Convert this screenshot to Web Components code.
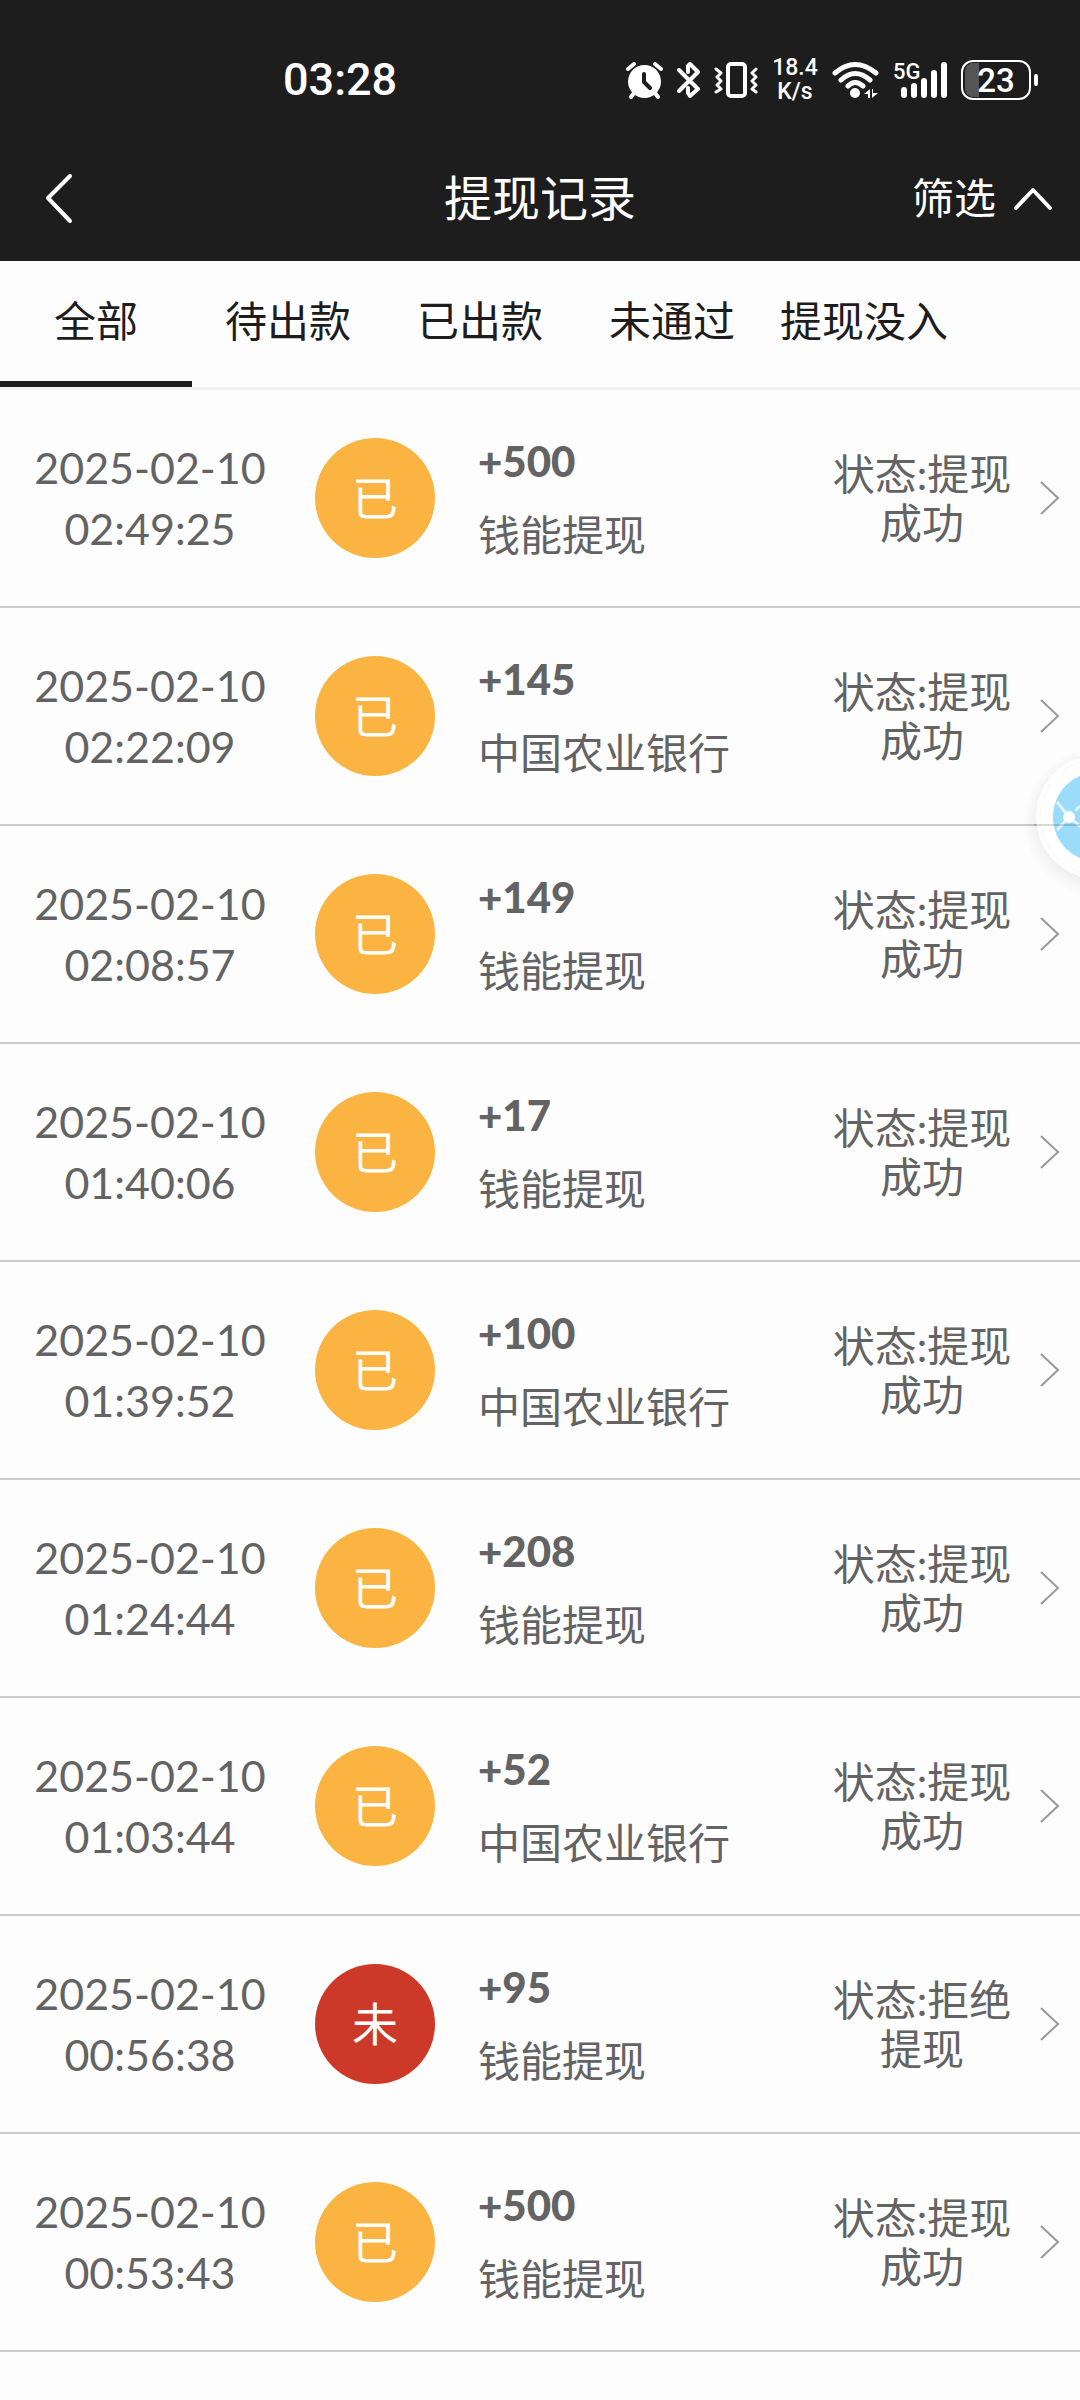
<!DOCTYPE html>
<html lang="zh-CN">
<head>
<meta charset="utf-8">
<meta name="viewport" content="width=device-width, initial-scale=1">
<title>提现记录</title>
<style>
  html, body { margin: 0; }
  body {
    position: relative;
    min-height: 100vh;
    overflow-x: hidden;
    background: #fdfdfd;
    color: #636363;
    font-family: Lato, "Noto Sans CJK SC", sans-serif;
    font-size: 42px;
  }
</style>
</head>
<body>
<status-bar time="03:28"></status-bar>
<nav-bar>提现记录<span slot="action">筛选</span></nav-bar>
<tab-strip></tab-strip>
<main><record-list></record-list></main>
<floating-ball></floating-ball>

<template id="status-bar">
  <style>
    :host {
      display: flex; justify-content: space-between; align-items: center;
      padding: 56px 41px 31px 283px;
      background: #1d1d1d; color: #fff;
      font-family: Roboto, sans-serif;
    }
    time { font-size: 45px; line-height: 48px; font-weight: 500; }
    .icons { display: flex; align-items: center; gap: 14px; }
    svg { display: block; height: 48px; fill: none; stroke: #fff; stroke-linecap: round; stroke-linejoin: round; }
    svg text { fill: #fff; stroke: none; }
    .speed { display: flex; flex-direction: column; width: 46px; text-align: center; font-size: 23px; line-height: 24px; font-weight: 500; }
  </style>
  <time></time>
  <div class="icons">
    <svg width="37" viewBox="0 0 37 48">
      <circle cx="18.500" cy="25.500" r="16.500" fill="#fff" stroke="none"/>
      <path d="M2 13 8 8M35 13 29 8" stroke-width="4"/>
      <path d="M8 37 5 41M29 37 32 41" stroke-width="4"/>
      <path d="M18 18V26L24 32" stroke="#1d1d1d" stroke-width="4"/>
    </svg>
    <svg width="23" viewBox="0 0 23 48" stroke-width="4">
      <path d="M2 14 21 33 13 40 11 37 11 32M2 35 21 16 13 8 11 10V16"/>
    </svg>
    <svg width="44" viewBox="0 0 44 48">
      <rect x="14" y="8" width="17" height="32" rx="3" stroke-width="4"/>
      <path d="M2 13 7 17 3 21 7 25 3 29 7 33 2 36M42 13 38 17 42 21 38 25 42 29 38 33 42 36" stroke-width="3"/>
    </svg>
    <div class="speed"><span>18.4</span><span>K/s</span></div>
    <svg width="47" viewBox="0 0 47 48">
      <path d="M3 17Q23 0 44 17M9 24Q23 11 38 24M16 30Q23 23 31 30" stroke-width="5"/>
      <circle cx="23" cy="37" r="5" fill="#fff" stroke="none"/>
      <path d="M32 38 38 33V42H36V38ZM40 33H41V37H46L40 42Z" fill="#fff" stroke="none"/>
    </svg>
    <svg width="54" viewBox="0 0 54 48">
      <text x="0" y="23" font-size="22" font-weight="500">5G</text>
      <path d="M11 34V39M21 30V39M31 25V39M41 17V39M51 9V39" stroke-width="6"/>
    </svg>
    <svg width="78" viewBox="0 0 78 48">
      <path d="M18 7V41H13Q4 41 4 32V16Q4 7 13 7Z" fill="#555" stroke="none"/>
      <rect x="1" y="5" width="68" height="38" rx="11" stroke-width="2"/>
      <path d="M75 20V28" stroke-width="4"/>
      <text x="35" y="36" font-size="33" font-weight="500" text-anchor="middle">23</text>
    </svg>
  </div>
</template>

<template id="nav-bar">
  <style>
    :host {
      display: grid; grid-template-columns: 1fr auto 1fr; align-items: center;
      height: 126px; background: #1d1d1d; color: #fff;
    }
    button { all: unset; box-sizing: border-box; display: flex; align-items: center; cursor: pointer; font-size: 42px; line-height: 60px; }
    .back { justify-self: start; padding: 0 44px; }
    .filter { justify-self: end; gap: 16px; padding-right: 26px; }
    h1 { margin: 0; font-size: 48px; line-height: 60px; font-weight: 400; }
    svg { display: block; fill: none; stroke: #fff; stroke-width: 4; stroke-linecap: round; stroke-linejoin: round; }
  </style>
  <button class="back" type="button" aria-label="返回">
    <svg width="30" height="52" viewBox="0 0 30 52"><path d="M26 4 4 26 26 49"/></svg>
  </button>
  <h1><slot></slot></h1>
  <button class="filter" type="button">
    <slot name="action"></slot>
    <svg width="42" height="26" viewBox="0 0 42 26"><path d="M4 23 21 5 38 23"/></svg>
  </button>
</template>

<template id="tab-strip">
  <style>
    :host { display: block; border-bottom: 3px solid #f2f2f2; color: #1d1d1d; }
    nav { display: flex; overflow: hidden; }
    button {
      all: unset; box-sizing: border-box; flex: 0 0 192px; height: 126px;
      border-bottom: 6px solid transparent;
      text-align: center; white-space: nowrap; line-height: 118px; cursor: pointer;
    }
    button[aria-selected="true"] { border-bottom-color: #1d1d1d; }
  </style>
  <nav role="tablist"></nav>
</template>

<template id="record-item">
  <style>
    :host { display: block; border-bottom: 2px solid #ccc; }
    a {
      display: grid; grid-template-columns: 300px 120px 1fr 200px 40px; align-items: center;
      height: 216px; padding-right: 18px; color: inherit; text-decoration: none;
    }
    .when { display: flex; flex-direction: column; text-align: center; font-size: 43px; line-height: 61px; }
    .badge {
      display: flex; align-items: center; justify-content: center;
      width: 120px; height: 120px; margin-left: 15px; border-radius: 50%;
      background: #fbb442; color: #fff; font-size: 46px; line-height: 60px;
    }
    :host([rejected]) .badge { background: #cd3928; }
    .info { display: flex; flex-direction: column; gap: 14px; padding-left: 58px; line-height: 60px; }
    .info strong { font-weight: 900; }
    .state { padding-top: 2px; text-align: center; line-height: 49px; }
    svg { display: block; margin-left: 16px; fill: none; stroke: #999; stroke-width: 2; }
  </style>
  <a href="#">
    <time class="when"><span class="date"></span><span class="clock"></span></time>
    <span class="badge"></span>
    <span class="info"><strong></strong><slot></slot></span>
    <span class="state"></span>
    <svg width="22" height="34" viewBox="0 0 22 34"><path d="M3 1 20 17 3 33"/></svg>
  </a>
</template>

<template id="floating-ball">
  <style>
    :host { position: absolute; top: 737px; right: 0; width: 64px; height: 160px; overflow: hidden; }
    button { all: unset; display: block; cursor: pointer; }
    svg { display: block; }
  </style>
  <button type="button" aria-label="悬浮球">
    <svg width="160" height="160" viewBox="0 0 160 160">
      <defs>
        <radialGradient id="halo">
          <stop offset="0.720" stop-color="#000" stop-opacity="0.070"/>
          <stop offset="1" stop-color="#000" stop-opacity="0"/>
        </radialGradient>
      </defs>
      <circle cx="82" cy="85" r="75" fill="url(#halo)"/>
      <circle cx="82" cy="80" r="62" fill="#fff"/>
      <circle cx="82" cy="80" r="58" fill="none" stroke="#f7f7f7"/>
      <circle cx="82" cy="80" r="45" fill="#9adcf9"/>
      <path d="M41 65 53 80 41 93M53 80 66 91" fill="none" stroke="#dff4fd" stroke-width="3"/>
      <path d="M60 74Q61 70 66 69" fill="none" stroke="#dff4fd" stroke-width="3"/>
      <circle cx="53" cy="80" r="6" fill="#fff"/>
      <path d="M18 88H66" stroke="#000" stroke-opacity="0.150" stroke-width="2"/>
    </svg>
  </button>
</template>

<script>
  class TemplateElement extends HTMLElement {
    constructor() {
      super();
      const root = this.attachShadow({ mode: "open" });
      root.append(document.getElementById(this.localName).content.cloneNode(true));
    }
    find(selector) { return this.shadowRoot.querySelector(selector); }
  }

  class StatusBar extends TemplateElement {
    connectedCallback() { this.find("time").textContent = this.getAttribute("time"); }
  }

  class NavBar extends TemplateElement {}

  class TabStrip extends TemplateElement {
    connectedCallback() {
      const nav = this.find("nav");
      const buttons = ["全部", "待出款", "已出款", "未通过", "提现没入"].map((label, index) => {
        const button = document.createElement("button");
        button.type = "button";
        button.setAttribute("role", "tab");
        button.setAttribute("aria-selected", String(index === 0));
        button.textContent = label;
        button.addEventListener("click", () =>
          buttons.forEach(b => b.setAttribute("aria-selected", String(b === button))));
        return button;
      });
      nav.replaceChildren(...buttons);
    }
  }

  class RecordItem extends TemplateElement {
    connectedCallback() {
      const rejected = this.hasAttribute("rejected");
      this.find(".date").textContent = this.getAttribute("date");
      this.find(".clock").textContent = this.getAttribute("clock");
      this.find("strong").textContent = "+" + this.getAttribute("amount");
      this.find(".badge").textContent = rejected ? "未" : "已";
      this.find(".state").textContent = "状态:" + (rejected ? "拒绝提现" : "提现成功");
      this.find("a").addEventListener("click", event => event.preventDefault());
    }
  }

  class RecordList extends HTMLElement {
    constructor() {
      super();
      this.attachShadow({ mode: "open" }).innerHTML =
        "<style>:host{display:block}ul{margin:0;padding:0;list-style:none}</style><ul></ul>";
    }
    connectedCallback() {
      const wallet = "钱能提现", bank = "中国农业银行";
      const records = [
        ["02:49:25", 500, wallet], ["02:22:09", 145, bank], ["02:08:57", 149, wallet],
        ["01:40:06", 17, wallet], ["01:39:52", 100, bank], ["01:24:44", 208, wallet],
        ["01:03:44", 52, bank], ["00:56:38", 95, wallet, true], ["00:53:43", 500, wallet]
      ];
      this.shadowRoot.querySelector("ul").innerHTML = records.map(([clock, amount, channel, rejected]) =>
        `<li><record-item date="2025-02-10" clock="${clock}" amount="${amount}"${rejected ? " rejected" : ""}>${channel}</record-item></li>`
      ).join("");
    }
  }

  class FloatingBall extends TemplateElement {}

  customElements.define("status-bar", StatusBar);
  customElements.define("nav-bar", NavBar);
  customElements.define("tab-strip", TabStrip);
  customElements.define("record-item", RecordItem);
  customElements.define("record-list", RecordList);
  customElements.define("floating-ball", FloatingBall);
</script>
</body>
</html>
